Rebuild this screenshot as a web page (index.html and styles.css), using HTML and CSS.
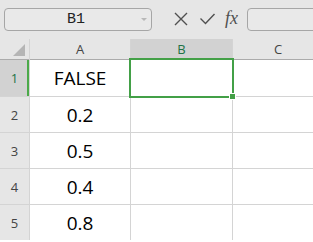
FILE: index.html
```html
<!DOCTYPE html>
<html lang="en">
<head>
    <meta charset="UTF-8">
    <title>Sheet</title>
    <link rel="stylesheet" href="styles.css">
</head>
<body>
    <div class="formula-bar">
        <div class="name-box">
            <span class="name-text">B1</span>
            <span class="name-arrow"></span>
        </div>
        <div class="bar-icons">
            <svg class="icon" width="14" height="14" viewBox="0 0 14 14">
                <path d="M1 1 L13 13 M13 1 L1 13" stroke="#505050" stroke-width="1.4" fill="none"/>
            </svg>
            <svg class="icon" width="17" height="14" viewBox="0 0 17 14">
                <path d="M1.5 6.5 L6.5 11.5 L15.5 2" stroke="#505050" stroke-width="1.4" fill="none"/>
            </svg>
            <span class="fx">fx</span>
        </div>
        <div class="formula-input"></div>
    </div>

    <div class="sheet">
        <div class="corner"><span class="corner-tri"></span></div>
        <div class="col-head">A</div>
        <div class="col-head selected">B</div>
        <div class="col-head">C</div>

        <div class="row-head selected">1</div>
        <div class="cell">FALSE</div>
        <div class="cell active"><span class="handle"></span></div>
        <div class="cell"></div>

        <div class="row-head">2</div>
        <div class="cell">0.2</div>
        <div class="cell"></div>
        <div class="cell"></div>

        <div class="row-head">3</div>
        <div class="cell">0.5</div>
        <div class="cell"></div>
        <div class="cell"></div>

        <div class="row-head">4</div>
        <div class="cell">0.4</div>
        <div class="cell"></div>
        <div class="cell"></div>

        <div class="row-head">5</div>
        <div class="cell">0.8</div>
        <div class="cell"></div>
        <div class="cell"></div>
    </div>
</body>
</html>
```

FILE: styles.css
```css
body {
    margin: 0;
    width: 313px;
    height: 242px;
    overflow: hidden;
    background: #fff;
    font-family: "Open Sans", "Noto Sans", sans-serif;
}

.formula-bar {
    display: flex;
    align-items: center;
    height: 38px;
    background: #e6e6e6;
}

.name-box {
    position: relative;
    width: 146px;
    height: 21px;
    margin-left: 4px;
    border: 1px solid #a6a6a6;
    border-radius: 4px;
    background: #e9e9e9;
    display: flex;
    align-items: center;
    justify-content: center;
}

.name-text {
    font-family: "Liberation Mono", monospace;
    font-size: 15px;
    color: #222;
    margin-left: -4px;
}

.name-arrow {
    position: absolute;
    right: 4px;
    top: 9px;
    border-left: 3px solid transparent;
    border-right: 3px solid transparent;
    border-top: 3px solid #b8b8b8;
}

.bar-icons {
    display: flex;
    align-items: center;
    gap: 11px;
    margin-left: 22px;
}

.fx {
    font-family: "Liberation Serif", serif;
    font-style: italic;
    font-size: 18px;
    color: #505050;
    margin-left: -2px;
    margin-top: -2px;
}

.formula-input {
    flex: 1;
    height: 21px;
    margin-left: 9px;
    margin-right: -10px;
    border: 1px solid #a6a6a6;
    border-radius: 4px;
    background: #e9e9e9;
}

.sheet {
    display: grid;
    grid-template-columns: 29px 100px 101px 90px;
    grid-template-rows: 20px 36px 35px 35px 35px 35px;
    column-gap: 1px;
    row-gap: 1px;
    background: #d4d4d4;
    border-top: 1px solid #e6e6e6;
}

.corner {
    position: relative;
    background: #e6e6e6;
    border-bottom: 1px solid #ababab;
    margin-bottom: -1px;
}

.corner-tri {
    position: absolute;
    right: 4px;
    bottom: 3px;
    width: 0;
    height: 0;
    border-left: 12px solid transparent;
    border-bottom: 12px solid #b5b5b5;
}

.col-head {
    background: #e6e6e6;
    border-bottom: 1px solid #ababab;
    margin-bottom: -1px;
    font-size: 13px;
    color: #444;
    display: flex;
    align-items: center;
    justify-content: center;
}

.col-head.selected {
    background: #d2d2d2;
    color: #217346;
    border-bottom: 2px solid #4caa4a;
}

.row-head {
    background: #e6e6e6;
    font-size: 13px;
    color: #444;
    display: flex;
    align-items: center;
    justify-content: center;
}

.row-head.selected {
    background: #d2d2d2;
    color: #217346;
    box-shadow: inset -2px 0 0 #4caa4a;
}

.cell {
    position: relative;
    background: #fff;
    font-size: 19px;
    font-weight: 500;
    color: #000;
    display: flex;
    align-items: center;
    justify-content: center;
}

.cell.active {
    outline: 2px solid #43a047;
    outline-offset: 0;
    z-index: 1;
}

.handle {
    position: absolute;
    right: -4px;
    bottom: -4px;
    width: 5px;
    height: 5px;
    background: #43a047;
    border: 1px solid #fff;
}
```
